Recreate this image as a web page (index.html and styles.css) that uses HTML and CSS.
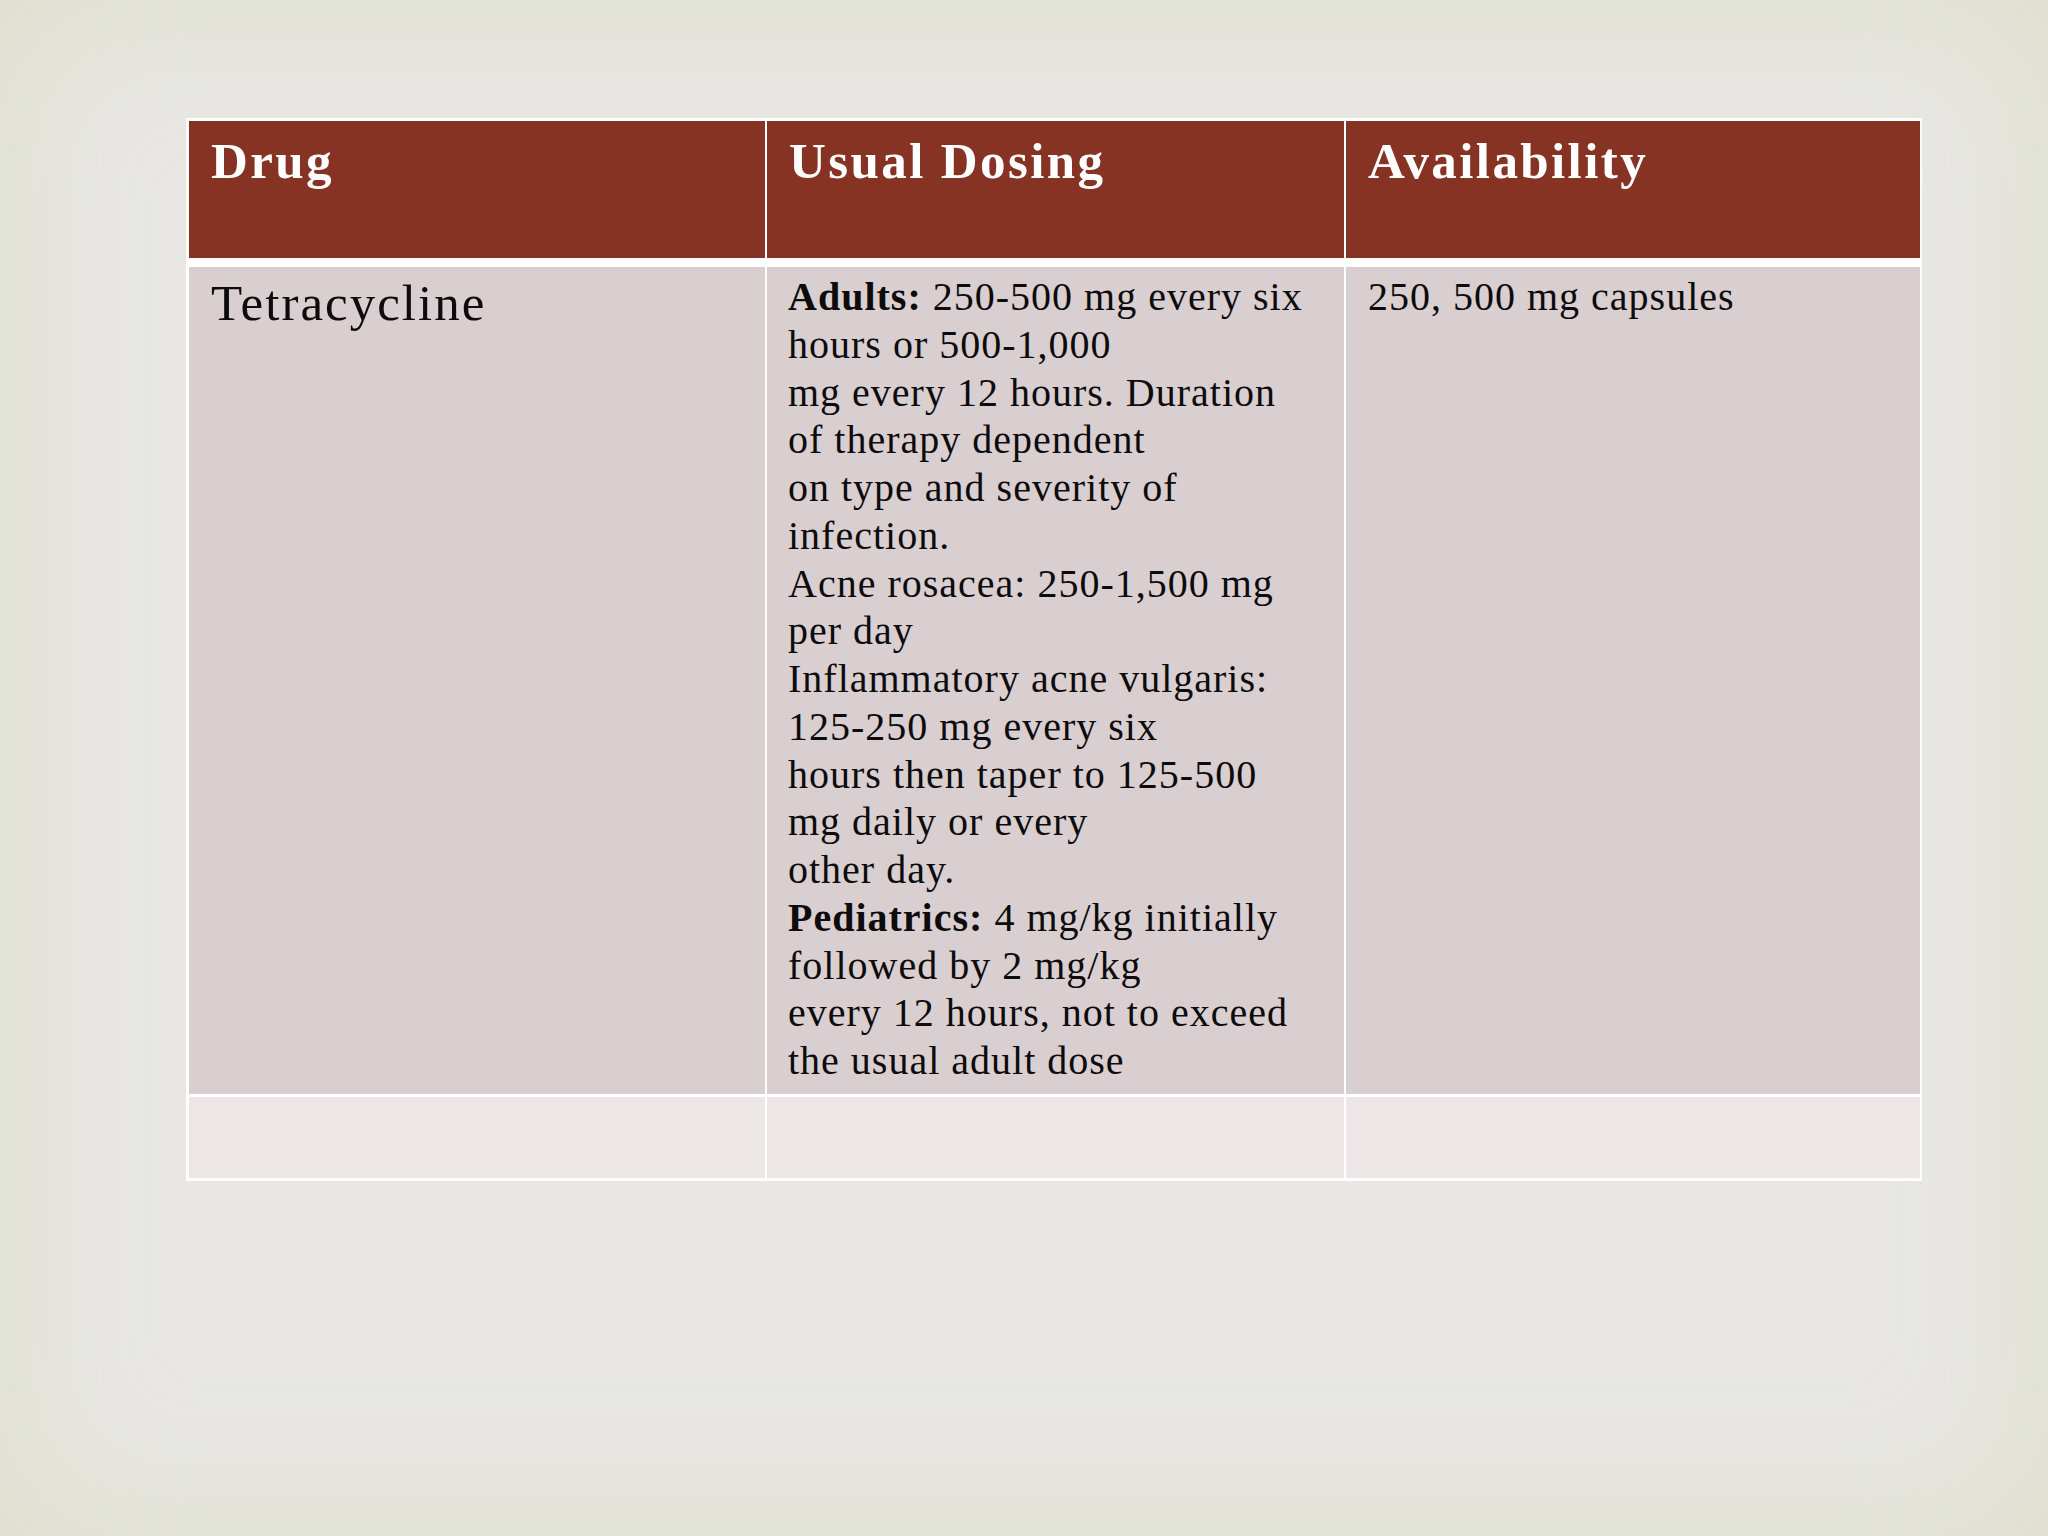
FILE: index.html
```html
<!DOCTYPE html>
<html>
<head>
<meta charset="utf-8">
<link rel="stylesheet" href="styles.css">
</head>
<body>
<div class="slide">
  <div class="grid">
    <div class="cell head">Drug</div>
    <div class="cell head">Usual Dosing</div>
    <div class="cell head">Availability</div>

    <div class="cell body drug">Tetracycline</div>
    <div class="cell body dosing"><b>Adults:</b> 250-500 mg every six<br>hours or 500-1,000<br>mg every 12 hours. Duration<br>of therapy dependent<br>on type and severity of<br>infection.<br>Acne rosacea: 250-1,500 mg<br>per day<br>Inflammatory acne vulgaris:<br>125-250 mg every six<br>hours then taper to 125-500<br>mg daily or every<br>other day.<br><b>Pediatrics:</b> 4 mg/kg initially<br>followed by 2 mg/kg<br>every 12 hours, not to exceed<br>the usual adult dose</div>
    <div class="cell body avail">250, 500 mg capsules</div>

    <div class="cell empty"></div>
    <div class="cell empty"></div>
    <div class="cell empty"></div>
  </div>
</div>
</body>
</html>
```

FILE: styles.css
```css
html, body {
  margin: 0;
  padding: 0;
}
body {
  background: #e7e6e3;
}
.slide {
  width: 2048px;
  height: 1536px;
  box-sizing: border-box;
  padding: 118px 0 0 186px;
  background: #e8e7e5;
  box-shadow: inset 0 0 140px 30px #dfe0cf;
  font-family: "Liberation Serif", "Times New Roman", serif;
  overflow: hidden;
}
.grid {
  display: grid;
  grid-template-columns: 576px 577px 574px;
  grid-template-rows: 143px 827px 81px;
  column-gap: 2px;
  row-gap: 3px;
  padding: 3px 2px 3px 3px;
  background: #ffffff;
  width: max-content;
}
.cell {
  box-sizing: border-box;
  white-space: nowrap;
}
.head {
  background: #863324;
  color: #ffffff;
  font-weight: bold;
  font-size: 51px;
  letter-spacing: 2.4px;
  line-height: 61px;
  padding: 10px 0 0 22px;
  margin-bottom: 6px;
}
.body {
  background: #d9cfd0;
  color: #0d0b0b;
  padding: 6px 0 0 22px;
}
.drug {
  font-size: 51px;
  letter-spacing: 2px;
  line-height: 61px;
}
.dosing, .avail {
  font-size: 40px;
  letter-spacing: 1px;
  line-height: 47.75px;
}
.dosing {
  padding-left: 21px;
}
.empty {
  background: #ece7e6;
}
```
